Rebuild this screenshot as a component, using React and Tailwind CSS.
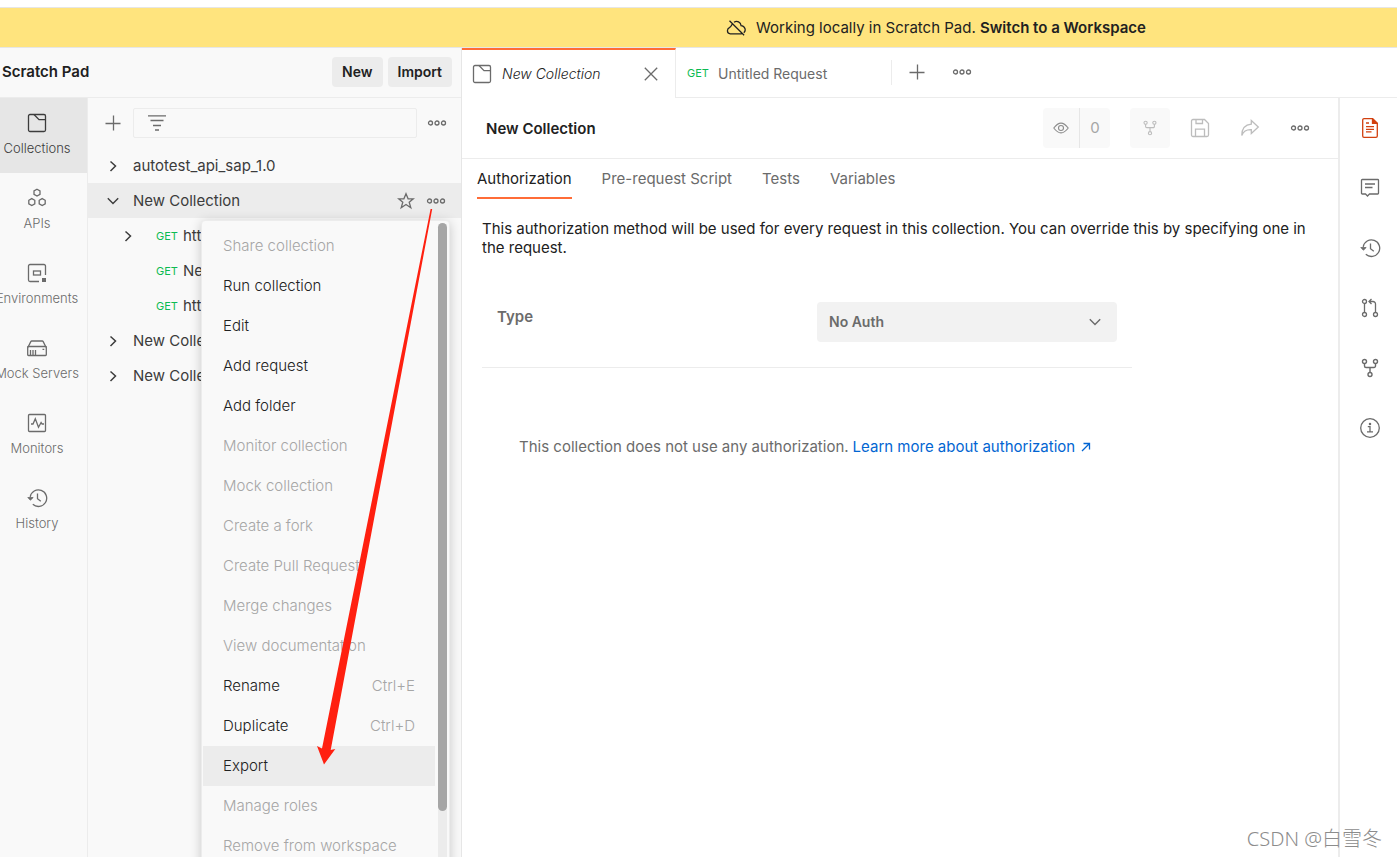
import React from "react";

function Svg({ w = 20, h = 20, className = "", children }) {
  return (
    <svg
      width={w}
      height={h}
      viewBox={`0 0 ${w} ${h}`}
      fill="none"
      stroke="currentColor"
      strokeWidth="1.3"
      className={`shrink-0 ${className}`}
      aria-hidden="true"
    >
      {children}
    </svg>
  );
}

const Dots = () => (
  <Svg w={20} h={8}>
    <circle cx="3.5" cy="4" r="2" />
    <circle cx="10" cy="4" r="2" />
    <circle cx="16.500" cy="4" r="2" />
  </Svg>
);
const Plus = () => (
  <Svg w={16} h={16}>
    <path d="M8.500 .5v15M.5 8.500h15" />
  </Svg>
);
const ChevronRight = () => (
  <Svg w={10} h={12} className="text-[#3c3c3c]">
    <path d="M2.500 1.500 7.500 6l-5 5" strokeWidth="1.5" />
  </Svg>
);
const ChevronDown = () => (
  <Svg w={12} h={8}>
    <path d="M.8 1.200 6 6.400l5.200-5.200" strokeWidth="1.400" />
  </Svg>
);
const CollectionIcon = () => (
  <Svg>
    <rect x="1.500" y="1.500" width="17" height="17" rx="1.500" />
    <path d="M7 1.500l5 5.200h6.500" />
  </Svg>
);
const ApisIcon = () => (
  <Svg>
    <path d="M10 1.200l3 1.700v3.500l-3 1.700-3-1.700V2.900zM4.800 10.600l3 1.700v3.500l-3 1.700-3-1.700v-3.500zM15.200 10.600l3 1.700v3.500l-3 1.700-3-1.700v-3.500z" />
  </Svg>
);
const EnvIcon = () => (
  <Svg>
    <path d="M18.500 12V3A1.500 1.500 0 0 0 17 1.500H3A1.500 1.500 0 0 0 1.500 3v14A1.500 1.500 0 0 0 3 18.500h9" />
    <rect x="6.500" y="8" width="7" height="4" />
    <rect x="15" y="15" width="4" height="4" fill="currentColor" stroke="none" />
  </Svg>
);
const ServerIcon = () => (
  <Svg>
    <path d="M1 9.200 3.800 3.600A1.200 1.200 0 0 1 4.900 3h10.200a1.200 1.200 0 0 1 1.100.6L19 9.200" />
    <rect x=".7" y="8.500" width="18.600" height="9" rx=".8" />
    <path d="M3.500 12v5M6 12v5M8.500 12v5M15.500 11.300h1.800" />
  </Svg>
);
const MonitorIcon = () => (
  <Svg>
    <rect x="1.500" y="1.500" width="17" height="17" rx="1" />
    <path d="M4 11h2l2.300-5.200 3.200 8.400 2.600-4.700 1 1.500H17" />
  </Svg>
);
const HistoryIcon = () => (
  <Svg w={22}>
    <path d="M4.200 8.800A8.300 8.300 0 1 1 6.800 16.300" />
    <path d="M1.800 9.500h5.400L4.400 12.200z" fill="currentColor" strokeWidth=".8" />
    <path d="M11.500 5.500v5.200l3.300 2.600" />
  </Svg>
);
const FilterIcon = () => (
  <Svg w={18} h={16} className="text-[#6b6b6b]">
    <path d="M0 .9h18M2.500 5.500h13M5 10.500h8M7 15h4" />
  </Svg>
);
const StarIcon = () => (
  <Svg w={18} h={18} className="text-[#6b6b6b]">
    <path d="M9 1.800l2.100 5h5.200l-4.100 3.400 1.600 5.600L9 12.500l-4.800 3.300 1.600-5.600L1.700 6.800h5.200z" />
  </Svg>
);
const CloudOffIcon = () => (
  <Svg w={20} h={16} className="text-[#212121]">
    <path d="M6.200 4.200C4.900 6.500 4.900 6.800 3.400 7.600.8 8.700.5 13.500 4.300 13.800h11.500M8 2.300c3-2 6.800-.2 7.100 3.400 4 .3 5.300 4.700 2.700 7M3.500.8l14.600 14.400" />
  </Svg>
);
const CloseIcon = () => (
  <Svg w={14} h={14}>
    <path d="M.8.8l12.400 12.400M13.200.8.8 13.200" />
  </Svg>
);
const EyeIcon = () => (
  <Svg w={16} h={12}>
    <path d="M.8 6Q8-3.800 15.200 6 8 15.800.8 6z" strokeWidth="1.100" />
    <circle cx="8" cy="6" r="2.500" strokeWidth="1.100" />
  </Svg>
);
const ForkIcon = ({ size = 20 }) => (
  <svg width={size} height={size} viewBox="0 0 20 20" fill="none" stroke="currentColor" strokeWidth="1.4" aria-hidden="true">
    <circle cx="4.500" cy="3.500" r="2" />
    <circle cx="15.500" cy="3.500" r="2" />
    <circle cx="10" cy="16.500" r="2" />
    <path d="M4.500 5.500V8A1.500 1.500 0 0 0 6 9.500h8A1.500 1.500 0 0 0 15.500 8V5.500M10 9.500v5" />
  </svg>
);
const SaveIcon = () => (
  <Svg>
    <path d="M1.500 3A1.500 1.500 0 0 1 3 1.500h11.500l4 4V17a1.500 1.500 0 0 1-1.500 1.500H3A1.500 1.500 0 0 1 1.500 17zM6 1.500v4h6.500v-4M5.500 18.500v-7.300h9v7.300" />
  </Svg>
);
const ShareIcon = () => (
  <Svg>
    <path d="M11.300 2.500 18.300 9l-7 6.500v-3.800C6.500 11.500 3.500 13 1.800 17.500 1.800 10.500 5.500 6.700 11.300 6.200z" />
  </Svg>
);
const DocIcon = () => (
  <Svg w={16} h={20} className="text-[#d2400f]">
    <path d="M2 .7h8.500l4.800 4.500V18a1.300 1.300 0 0 1-1.300 1.300H2A1.300 1.300 0 0 1 .7 18V2A1.300 1.300 0 0 1 2 .7z" />
    <path d="M10.500.7v4.700h4.800z" fill="currentColor" />
    <path d="M4 5h3M4 8.700h8M4 11.300h8M4 13.800h5.500" />
  </Svg>
);
const CommentIcon = () => (
  <Svg>
    <path d="M2.300 1.500h15.400a.8.8 0 0 1 .8.800v12.900a.8.8 0 0 1-.8.800H9.500l-2 2-2-2H2.300a.8.8 0 0 1-.8-.8V2.300a.8.8 0 0 1 .8-.8zM5 6h10M5 9.500h7.500" />
  </Svg>
);
const PullIcon = () => (
  <Svg>
    <circle cx="4.500" cy="3.500" r="2" />
    <circle cx="4.500" cy="16.500" r="2" />
    <circle cx="15.500" cy="16.500" r="2" />
    <path d="M4.500 5.500v9M15.500 14.500V6A2.500 2.500 0 0 0 13 3.500H9M11.500 1 9 3.500 11.500 6" />
  </Svg>
);
const InfoIcon = () => (
  <Svg>
    <circle cx="10" cy="10" r="9.300" />
    <path d="M7.800 8.700H10v5M7 13.800h6" />
    <circle cx="10" cy="6" r=".6" fill="currentColor" />
  </Svg>
);

const navItems = [
  { label: "Collections", Icon: CollectionIcon, active: true },
  { label: "APIs", Icon: ApisIcon },
  { label: "Environments", Icon: EnvIcon },
  { label: "Mock Servers", Icon: ServerIcon },
  { label: "Monitors", Icon: MonitorIcon },
  { label: "History", Icon: HistoryIcon },
];

const menuItems = [
  { label: "Share collection", disabled: true },
  { label: "Run collection" },
  { label: "Edit" },
  { label: "Add request" },
  { label: "Add folder" },
  { label: "Monitor collection", disabled: true },
  { label: "Mock collection", disabled: true },
  { label: "Create a fork", disabled: true },
  { label: "Create Pull Request", disabled: true },
  { label: "Merge changes", disabled: true },
  { label: "View documentation", disabled: true },
  { label: "Rename", keys: "Ctrl+E" },
  { label: "Duplicate", keys: "Ctrl+D" },
  { label: "Export", active: true },
  { label: "Manage roles", disabled: true },
  { label: "Remove from workspace", disabled: true },
];

function Banner() {
  return (
    <div className="flex h-[41px] shrink-0 items-center justify-center border-y border-[#e6e6e6] bg-[#ffe47e] pl-[475px] text-[#212121]">
      <CloudOffIcon />
      <p className="ml-2.5 whitespace-nowrap">
        Working locally in Scratch Pad.{" "}
        <a href="#workspace" className="font-semibold">
          Switch to a Workspace
        </a>
      </p>
    </div>
  );
}

function NavRail() {
  return (
    <nav className="w-[88px] shrink-0 border-r border-[#ececec] text-[13px] font-light text-[#6b6b6b]">
      {navItems.map(({ label, Icon, active }) => (
        <button
          key={label}
          type="button"
          className={`flex h-[75px] w-full flex-col items-center gap-[5px] pt-[15px] pr-[13px] leading-5 whitespace-nowrap ${
            active ? "bg-[#e6e6e6] text-[#3c3c3c]" : ""
          }`}
        >
          <Icon />
          <span>{label}</span>
        </button>
      ))}
    </nav>
  );
}

function ContextMenu() {
  return (
    <div className="absolute top-[37px] left-[113px] z-10 flex w-[249px] rounded border border-[#ececec] bg-[#f9f9f9] font-light shadow-[0_2px_12px_rgba(0,0,0,0.2)]">
      <ul role="menu" className="flex-1 py-[5px] pl-px">
        {menuItems.map(({ label, disabled, keys, active }) => (
          <li key={label} role="none">
            <button
              type="button"
              role="menuitem"
              disabled={disabled}
              className={`flex h-10 w-full items-center justify-between px-5 whitespace-nowrap ${
                disabled ? "text-[#a6a6a6]" : "text-[#212121]"
              } ${active ? "bg-[#ececec]" : ""}`}
            >
              <span>{label}</span>
              {keys && <span className="text-[#a6a6a6]">{keys}</span>}
            </button>
          </li>
        ))}
      </ul>
      <div className="mt-0.5 mr-0.5 ml-[3px] w-[9px] rounded-full bg-[#ececec]">
        <div className="h-[588px] rounded-full bg-[#a6a6a6]" />
      </div>
    </div>
  );
}

function TreeRow({ label }) {
  return (
    <button type="button" className="flex h-[35px] w-full items-center gap-[15px] pl-5">
      <ChevronRight />
      <span>{label}</span>
    </button>
  );
}

function RequestRow({ label, expandable }) {
  return (
    <button type="button" className="flex h-[35px] w-full items-center pl-[35px] whitespace-nowrap">
      <span className="w-[33px]">{expandable && <ChevronRight />}</span>
      <span className="w-[27px] text-left text-[11px] text-[#0cbb52]">GET</span>
      <span>{label}</span>
    </button>
  );
}

function CollectionTree() {
  return (
    <div className="min-w-0 flex-1 text-[#3c3c3c]">
      <div className="flex h-[50px] items-center pr-3.5 pl-[17px] text-[#6b6b6b]">
        <button type="button" aria-label="Create new collection">
          <Plus />
        </button>
        <label className="mr-2.5 ml-3 flex h-[30px] min-w-0 flex-1 items-center rounded-xs border border-[#ececec] px-3.5">
          <FilterIcon />
          <input type="text" aria-label="Filter collections" className="min-w-0 flex-1 bg-transparent pl-2 outline-none" />
        </label>
        <button type="button" aria-label="View more actions">
          <Dots />
        </button>
      </div>
      <TreeRow label="autotest_api_sap_1.0" />
      <div className="relative flex h-[35px] items-center bg-[#ececec] pr-[15px]">
        <button type="button" className="flex flex-1 items-center gap-3.5 pl-[19px] text-left">
          <ChevronDown />
          <span>New Collection</span>
        </button>
        <button type="button" aria-label="Favorite" className="mr-[11px]">
          <StarIcon />
        </button>
        <button type="button" aria-label="Collection actions" className="text-[#6b6b6b]">
          <Dots />
        </button>
        <ContextMenu />
      </div>
      <RequestRow label="http" expandable />
      <RequestRow label="New" />
      <RequestRow label="http" />
      <TreeRow label="New Collection" />
      <TreeRow label="New Collection" />
    </div>
  );
}

function LeftPanel() {
  return (
    <aside className="flex w-[462px] shrink-0 flex-col border-r border-[#e6e6e6] bg-[#f9f9f9]">
      <header className="flex h-[50px] shrink-0 items-center gap-[5px] border-b border-[#ececec] pr-[9px] pb-px pl-0.5 text-sm font-semibold text-[#212121]">
        <h1 className="flex-1 text-[15px]">Scratch Pad</h1>
        <button type="button" className="h-[30px] rounded bg-[#ececec] px-2.5">
          New
        </button>
        <button type="button" className="h-[30px] rounded bg-[#ececec] px-2.5">
          Import
        </button>
      </header>
      <div className="flex flex-1">
        <NavRail />
        <CollectionTree />
      </div>
    </aside>
  );
}

function TabBar() {
  return (
    <div className="flex h-[50px] shrink-0 text-sm text-[#6b6b6b]">
      <div className="flex w-[214px] items-center border-t-2 border-r border-t-[#ff6c37] border-r-[#ececec] pr-[17px] pl-2.5">
        <CollectionIcon />
        <span className="ml-2.5 flex-1 font-light text-[#212121] italic">New Collection</span>
        <button type="button" aria-label="Close tab">
          <CloseIcon />
        </button>
      </div>
      <div className="flex flex-1 items-center border-b border-[#ececec]">
        <div className="flex h-[25px] w-[216px] items-center border-r border-[#ececec] pt-0.5 pl-[11px]">
          <span className="w-[31px] text-[11px] text-[#0cbb52]">GET</span>
          <span>Untitled Request</span>
        </div>
        <div className="flex items-center gap-[27px] pb-0.5 pl-[17px]">
          <button type="button" aria-label="Open new tab">
            <Plus />
          </button>
          <button type="button" aria-label="Tab options">
            <Dots />
          </button>
        </div>
      </div>
    </div>
  );
}

function Toolbar() {
  return (
    <div className="flex h-[61px] shrink-0 items-center border-b border-[#ececec] pr-7 pl-6">
      <h2 className="flex-1 pt-px font-semibold text-[#212121]">New Collection</h2>
      <div className="flex h-10 text-[#a6a6a6]">
        <button type="button" aria-label="Watch" className="flex w-[37px] items-center justify-center rounded-l border-r border-[#e6e6e6] bg-[#f9f9f9] text-[#8c8c8c]">
          <EyeIcon />
        </button>
        <button type="button" className="w-[30px] rounded-r bg-[#f9f9f9]">
          0
        </button>
        <button type="button" aria-label="Fork" className="ml-5 flex w-10 items-center justify-center rounded bg-[#f9f9f9] text-[#bdbdbd]">
          <ForkIcon size={16} />
        </button>
      </div>
      <div className="ml-5 flex items-center gap-[30px] text-[#bdbdbd]">
        <button type="button" aria-label="Save">
          <SaveIcon />
        </button>
        <button type="button" aria-label="Share">
          <ShareIcon />
        </button>
        <button type="button" aria-label="More actions" className="text-[#6b6b6b]">
          <Dots />
        </button>
      </div>
    </div>
  );
}

function AuthPane() {
  return (
    <div className="flex-1 text-[#212121]">
      <nav className="flex gap-[30px] pl-[15px] text-[#6b6b6b]">
        <a href="#authorization" className="flex h-10 items-center text-[#212121] shadow-[inset_0_-2px_0_#ff6c37]">
          Authorization
        </a>
        <a href="#pre-request" className="flex h-10 items-center">
          Pre-request Script
        </a>
        <a href="#tests" className="flex h-10 items-center">
          Tests
        </a>
        <a href="#variables" className="flex h-10 items-center">
          Variables
        </a>
      </nav>
      <div className="px-5 pt-5">
        <p className="leading-[19px]">
          This authorization method will be used for every request in this collection. You can override this by
          specifying one in the request.
        </p>
        <div className="mt-[45px] flex max-w-[650px] items-start border-b border-[#ececec] pr-[15px] pb-[25px] pl-[15px]">
          <label htmlFor="auth-type" className="flex-1 pt-[5px] font-semibold text-[#6b6b6b]">
            Type
          </label>
          <div className="relative w-[300px]">
            <select
              id="auth-type"
              defaultValue="No Auth"
              className="h-10 w-full appearance-none rounded bg-[#f2f2f2] pl-3 text-sm font-semibold text-[#6b6b6b] outline-none"
            >
              <option>No Auth</option>
            </select>
            <span className="pointer-events-none absolute top-4 right-4 text-[#6b6b6b]">
              <ChevronDown />
            </span>
          </div>
        </div>
        <p className="mt-[69px] flex items-center pl-[37px] whitespace-nowrap text-[#6b6b6b]">
          This collection does not use any authorization.
          <a href="#learn" className="ml-1 flex items-center gap-1.5 text-[#0265d2]">
            Learn more about authorization
            <Svg w={10} h={10}>
              <path d="M1 9 8.500 1.500M2.500 1.500h6v6" />
            </Svg>
          </a>
        </p>
      </div>
    </div>
  );
}

function RightRail() {
  const tools = [
    ["Documentation", DocIcon],
    ["Comments", CommentIcon],
    ["Changelog", HistoryIcon],
    ["Pull requests", PullIcon],
    ["Forks", ForkIcon],
    ["Info", InfoIcon],
  ];
  return (
    <aside className="w-[59px] shrink-0 border-l-2 border-[#ececec] pl-[3px] text-[#6b6b6b]">
      {tools.map(([label, Icon]) => (
        <button key={label} type="button" aria-label={label} className="flex h-[60px] w-full items-center justify-center">
          <Icon />
        </button>
      ))}
    </aside>
  );
}

export default function App() {
  return (
    <div className="relative flex h-screen flex-col overflow-hidden bg-white pt-[7px] font-['Inter','Noto_Sans_CJK_SC',sans-serif] text-[15px] leading-5">
      <Banner />
      <div className="flex min-h-0 flex-1">
        <LeftPanel />
        <main className="flex min-w-0 flex-1 flex-col">
          <TabBar />
          <div className="flex flex-1">
            <section className="flex min-w-0 flex-1 flex-col">
              <Toolbar />
              <AuthPane />
            </section>
            <RightRail />
          </div>
        </main>
      </div>
      <svg
        width="120"
        height="560"
        viewBox="0 0 120 560"
        className="pointer-events-none absolute top-[207px] left-[315px] z-20"
        aria-hidden="true"
      >
        <path d="M115.600 2h1.600L15.700 543l4.600-1L9 557.500 2 539l5 2.500z" fill="#ff2010" />
      </svg>
      <div className="pointer-events-none absolute right-[15px] bottom-2 font-['Noto_Sans','Noto_Sans_CJK_SC',sans-serif] text-[20px] leading-5 font-light text-[#8c8c8c]">
        CSDN @白雪冬
      </div>
    </div>
  );
}
